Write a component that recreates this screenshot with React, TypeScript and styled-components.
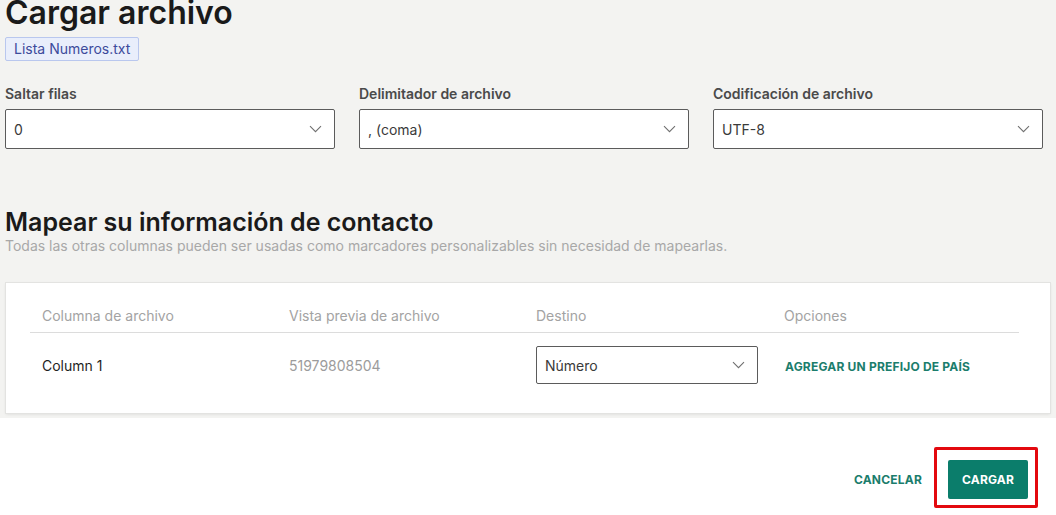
import styled, { createGlobalStyle } from 'styled-components'

const GlobalStyle = createGlobalStyle`
  html, body {
    margin: 0;
    padding: 0;
    background: #ffffff;
  }
  body {
    font-family: Inter, "Noto Sans", sans-serif;
    color: #1c1c1c;
  }
`

const Page = styled.div`
  width: 1056px;
  height: 515px;
  display: flex;
  flex-direction: column;
  overflow: hidden;
`

const Upper = styled.div`
  background: #f3f3f1;
  padding: 0 12px 5px 5px;
  display: flex;
  flex-direction: column;
`

const Title = styled.h1`
  margin: -5px 0 0 0;
  font-size: 32px;
  line-height: 36px;
  font-weight: 600;
  color: #1a1a1a;
`

const FileChip = styled.span`
  align-self: flex-start;
  margin-top: 6px;
  padding: 0 8px;
  height: 22px;
  line-height: 22px;
  font-size: 14px;
  color: #3d4b9b;
  background: #e9eefb;
  border: 1px solid #b9c7ee;
  border-radius: 2px;
`

const OptionsRow = styled.div`
  display: grid;
  grid-template-columns: repeat(3, 330px);
  gap: 24px;
  margin-top: 24px;
`

const Field = styled.div`
  display: flex;
  flex-direction: column;
  gap: 7px;
`

const FieldLabel = styled.label`
  font-size: 14px;
  font-weight: 600;
  line-height: 17px;
  color: #4a4a4a;
`

const SelectBox = styled.div<{ $height?: number }>`
  height: ${p => p.$height ?? 40}px;
  box-sizing: border-box;
  background: #ffffff;
  border: 1px solid #5b5b5b;
  border-radius: 2px;
  display: flex;
  align-items: center;
  justify-content: space-between;
  padding: 0 12px 0 8px;
  font-size: 14px;
  color: #3a3a3a;
`

const Chevron = () => (
  <svg width="13" height="8" viewBox="0 0 13 8" fill="none">
    <path d="M1 1.2l5.5 5.5 5.5-5.5" stroke="#707070" strokeWidth="1.1" />
  </svg>
)

const SectionTitle = styled.h2`
  margin: 58px 0 0 0;
  font-size: 25px;
  line-height: 30px;
  font-weight: 600;
  color: #1a1a1a;
`

const SectionHint = styled.p`
  margin: 0;
  font-size: 14px;
  line-height: 18px;
  color: #a8a8a8;
`

const Card = styled.div`
  margin: 28px -6px 0 1px;
  background: #ffffff;
  box-shadow: 0 0 0 1px #e3e3e1, 0 1px 3px rgba(0, 0, 0, 0.12);
  padding: 24px 31px 0 24px;
  height: 130px;
  box-sizing: border-box;
`

const TableRow = styled.div<{ $head?: boolean }>`
  display: grid;
  grid-template-columns: repeat(4, 247px);
  align-items: center;
  height: ${p => (p.$head ? 25 : 64)}px;
  border-bottom: ${p => (p.$head ? '1px solid #dcdcdc' : 'none')};
`

const Cell = styled.div<{ $tone?: 'head' | 'muted' | 'normal'; $inset?: number }>`
  padding-left: ${p => p.$inset ?? 12}px;
  font-size: 14px;
  line-height: 17px;
  color: ${p => (p.$tone === 'head' ? '#a3a3a3' : p.$tone === 'muted' ? '#9c9c9c' : '#1f1f1f')};
  align-self: ${p => (p.$tone === 'head' ? 'start' : 'center')};
`

const DestCell = styled.div`
  padding: 0 13px 0 12px;
`

const TextLink = styled.button`
  background: none;
  border: none;
  padding: 0;
  font-family: inherit;
  font-size: 12px;
  font-weight: 700;
  letter-spacing: 0.2px;
  color: #1b7d6c;
  cursor: pointer;
`

const Footer = styled.div`
  flex: 1;
  display: flex;
  justify-content: flex-end;
  align-items: flex-start;
  padding: 29px 18px 0 0;
  gap: 12px;
`

const CancelCell = styled.div`
  height: 61px;
  display: flex;
  align-items: center;
  padding-top: 3px;
  box-sizing: border-box;
`

const Highlight = styled.div`
  border: 3px solid #e3090f;
  border-radius: 2px;
  padding: 10px 7px 6px 11px;
`

const PrimaryButton = styled.button`
  display: block;
  width: 80px;
  height: 39px;
  padding: 0;
  background: #0b7d6b;
  color: #ffffff;
  border: none;
  border-radius: 2px;
  font-family: inherit;
  font-size: 12px;
  font-weight: 700;
  letter-spacing: 0.2px;
`

const selects = [
  { label: 'Saltar filas', value: '0' },
  { label: 'Delimitador de archivo', value: ', (coma)' },
  { label: 'Codificación de archivo', value: 'UTF-8' },
]

export default function App() {
  return (
    <Page>
      <GlobalStyle />
      <Upper>
        <Title>Cargar archivo</Title>
        <FileChip>Lista Numeros.txt</FileChip>

        <OptionsRow>
          {selects.map(s => (
            <Field key={s.label}>
              <FieldLabel>{s.label}</FieldLabel>
              <SelectBox>
                <span>{s.value}</span>
                <Chevron />
              </SelectBox>
            </Field>
          ))}
        </OptionsRow>

        <SectionTitle>Mapear su información de contacto</SectionTitle>
        <SectionHint>
          Todas las otras columnas pueden ser usadas como marcadores personalizables sin necesidad de mapearlas.
        </SectionHint>

        <Card>
          <TableRow $head>
            <Cell $tone="head">Columna de archivo</Cell>
            <Cell $tone="head">Vista previa de archivo</Cell>
            <Cell $tone="head">Destino</Cell>
            <Cell $tone="head" $inset={13}>Opciones</Cell>
          </TableRow>
          <TableRow>
            <Cell>Column 1</Cell>
            <Cell $tone="muted">51979808504</Cell>
            <DestCell>
              <SelectBox $height={38}>
                <span>Número</span>
                <Chevron />
              </SelectBox>
            </DestCell>
            <Cell $inset={14}>
              <TextLink>AGREGAR UN PREFIJO DE PAÍS</TextLink>
            </Cell>
          </TableRow>
        </Card>
      </Upper>

      <Footer>
        <CancelCell>
          <TextLink>CANCELAR</TextLink>
        </CancelCell>
        <Highlight>
          <PrimaryButton>CARGAR</PrimaryButton>
        </Highlight>
      </Footer>
    </Page>
  )
}
